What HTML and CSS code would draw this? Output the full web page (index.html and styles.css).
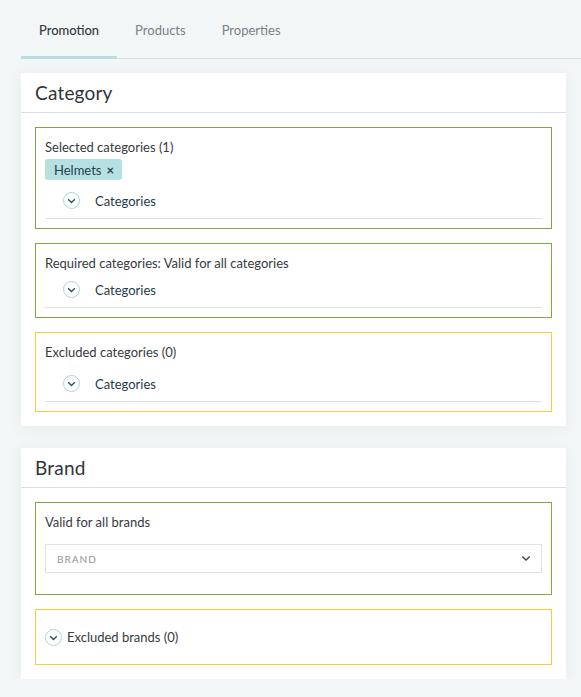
FILE: index.html
```html
<!DOCTYPE html>
<html lang="en">
<head>
<meta charset="utf-8">
<title>Promotion</title>
<link rel="stylesheet" href="styles.css">
</head>
<body>
<div class="page">
  <nav class="tabs">
    <div class="tab active">Promotion</div>
    <div class="tab">Products</div>
    <div class="tab">Properties</div>
  </nav>

  <section class="card">
    <header class="card-head">Category</header>
    <div class="card-body">
      <div class="box box-olive">
        <div class="label">Selected categories (1)</div>
        <div class="tags"><span class="tag">Helmets <span class="x">×</span></span></div>
        <div class="tree-row">
          <span class="circle"><svg width="9" height="6" viewBox="0 0 9 6"><path d="M1.2 1.2 L4.5 4.5 L7.8 1.2" fill="none" stroke="#2c4a58" stroke-width="1.3"/></svg></span>
          <span class="tree-text">Categories</span>
        </div>
      </div>

      <div class="box box-green">
        <div class="label">Required categories: Valid for all categories</div>
        <div class="tree-row">
          <span class="circle"><svg width="9" height="6" viewBox="0 0 9 6"><path d="M1.2 1.2 L4.5 4.5 L7.8 1.2" fill="none" stroke="#2c4a58" stroke-width="1.3"/></svg></span>
          <span class="tree-text">Categories</span>
        </div>
      </div>

      <div class="box box-yellow">
        <div class="label label-spaced">Excluded categories (0)</div>
        <div class="tree-row">
          <span class="circle"><svg width="9" height="6" viewBox="0 0 9 6"><path d="M1.2 1.2 L4.5 4.5 L7.8 1.2" fill="none" stroke="#2c4a58" stroke-width="1.3"/></svg></span>
          <span class="tree-text">Categories</span>
        </div>
      </div>
    </div>
  </section>

  <section class="card card-second">
    <header class="card-head">Brand</header>
    <div class="card-body">
      <div class="box box-green box-brand">
        <div class="label">Valid for all brands</div>
        <div class="select">
          <span class="placeholder">BRAND</span>
          <svg width="10" height="7" viewBox="0 0 10 7"><path d="M1.3 1.5 L5 5 L8.7 1.5" fill="none" stroke="#3d4a55" stroke-width="1.5"/></svg>
        </div>
      </div>

      <div class="box box-yellow box-excluded">
        <span class="circle"><svg width="9" height="6" viewBox="0 0 9 6"><path d="M1.2 1.2 L4.5 4.5 L7.8 1.2" fill="none" stroke="#2c4a58" stroke-width="1.3"/></svg></span>
        <span class="excl-text">Excluded brands (0)</span>
      </div>
    </div>
  </section>
</div>
</body>
</html>
```

FILE: styles.css
```css
* { box-sizing: border-box; }

html, body {
  margin: 0;
  padding: 0;
  background: #f3f6f7;
}

body {
  font-family: Lato, "Open Sans", "Liberation Sans", sans-serif;
  color: #353b41;
}

.page {
  padding: 0 15px 0 21px;
}

.tabs {
  display: flex;
  height: 59px;
  border-bottom: 1px solid #d7dcdf;
  margin-right: -15px;
}

.tab {
  height: 59px;
  margin-bottom: -1px;
  padding: 2px 18px 0;
  font-size: 13px;
  line-height: 56px;
  color: #7a8086;
  border-bottom: 3px solid transparent;
}

.tab.active {
  color: #2f3439;
  border-bottom-color: #b5dde2;
  -webkit-text-stroke: 0.1px #2f3439;
}

.card {
  background: #fff;
  margin-top: 14px;
  box-shadow: 0 2px 14px rgba(40, 60, 70, 0.06);
}

.card-second {
  margin-top: 22px;
}

.card-head {
  height: 40px;
  padding: 1px 0 0 14px;
  font-size: 19px;
  line-height: 37px;
  color: #2f353a;
  border-bottom: 1px solid #dcdfe2;
  letter-spacing: 0.2px;
}

.card-body {
  padding: 14px;
  display: flex;
  flex-direction: column;
  gap: 14px;
}

.box {
  border: 1px solid #7dab3c;
  padding: 9px;
}

.box-olive { border-color: #82a047; }
.box-green { border-color: #7dab3c; }
.box-yellow { border-color: #f4cd3e; }

.label {
  padding-top: 1px;
  margin-bottom: -1px;
  font-size: 13px;
  line-height: 18px;
  color: #353b41;
}

.label-spaced {
  margin-bottom: 4px;
}

.tags {
  display: flex;
  margin-top: 4px;
  margin-bottom: 2px;
}

.tag {
  display: inline-flex;
  align-items: center;
  height: 21px;
  padding: 1px 8px 0 9px;
  background: #b7e0e3;
  border-radius: 3px;
  font-size: 13px;
  color: #23404c;
}

.tag .x {
  margin-left: 5px;
  font-size: 13px;
  font-weight: 700;
}

.tree-row {
  display: flex;
  align-items: center;
  height: 37px;
  padding: 1px 0 0 18px;
  border-bottom: 1px solid #dfe1e3;
}

.circle {
  width: 17px;
  height: 17px;
  border: 1px solid #a8d6dc;
  border-radius: 50%;
  display: inline-flex;
  align-items: center;
  justify-content: center;
  flex: none;
}

.circle svg { margin-top: 1px; }

.tree-text {
  margin-left: 15px;
  font-size: 13px;
  color: #1f3b49;
}

.box-brand {
  padding-bottom: 21px;
}

.select {
  margin-top: 14px;
  height: 29px;
  border: 1px solid #dfe2e6;
  display: flex;
  align-items: center;
  justify-content: space-between;
  padding: 0 10px 0 11px;
}

.placeholder {
  font-size: 10px;
  letter-spacing: 1px;
  color: #8e959c;
}

.box-excluded {
  display: flex;
  align-items: center;
  height: 56px;
  padding: 0 9px;
}

.excl-text {
  margin-left: 5px;
  font-size: 13px;
  color: #353b41;
}
```
